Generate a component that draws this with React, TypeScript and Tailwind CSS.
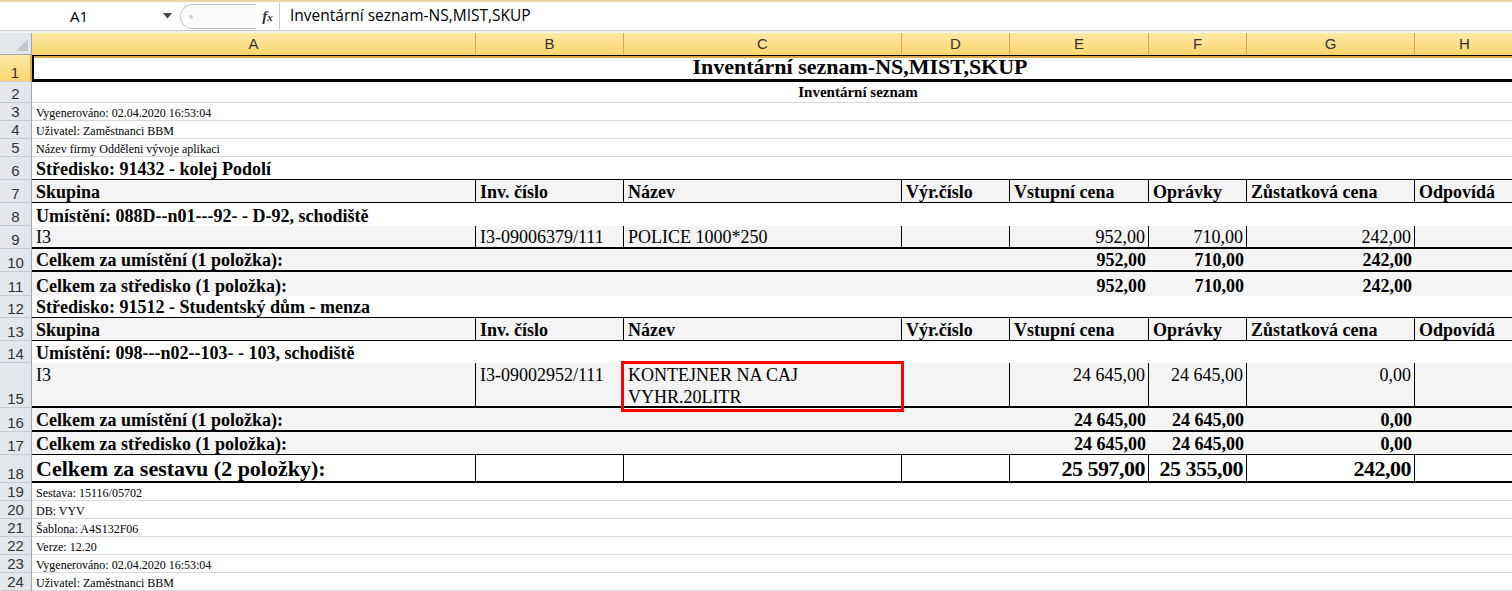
import React from 'react';

const COLS = 'grid-cols-[444px_148px_278px_108px_139px_98px_168px_100px_169px]';
const SERIF = "font-['Liberation_Serif','Times_New_Roman',serif]";
const SANS = "font-['Liberation_Sans',Arial,sans-serif]";

type RowProps = {
  n: number;
  h: string;
  active?: boolean;
  className?: string;
  children?: React.ReactNode;
};

const Row: React.FC<RowProps> = ({ n, h, active, className = '', children }) => (
  <div className={`flex ${h}`}>
    <div
      className={`w-[32px] shrink-0 flex items-end justify-center pb-[1px] text-[15px] leading-none ${SANS} border-b border-[#c6cbd2] ${
        active ? 'bg-gradient-to-b from-[#fde9a4] to-[#fbd66e] text-[#333] border-r-2 border-r-[#e2a848]' : 'bg-[#e4e7ec] text-[#333] border-r border-r-[#9ea6b2]'
      }`}
    >
      {n}
    </div>
    <div className={`grid ${COLS} ${SERIF} text-black ${className}`}>{children}</div>
  </div>
);

// plain text cell
const Cell: React.FC<{ className?: string; children?: React.ReactNode }> = ({ className = '', children }) => (
  <div className={`flex items-end px-[4px] pb-[1px] whitespace-nowrap overflow-visible ${className}`}>{children}</div>
);

const headers = ['Skupina', 'Inv. číslo', 'Název', 'Výr.číslo', 'Vstupní cena', 'Oprávky', 'Zůstatková cena', 'Odpovídá'];

const HeaderRow: React.FC<{ n: number }> = ({ n }) => (
  <Row n={n} h="h-[23px]" className="bg-[#f4f4f4] border-b border-black text-[18px] font-bold leading-none">
    {headers.map((t, i) => (
      <Cell key={t} className={i < 7 ? 'border-r border-black' : ''}>
        {t}
      </Cell>
    ))}
    <Cell />
  </Row>
);

const SmallRow: React.FC<{ n: number; text: string }> = ({ n, text }) => (
  <Row n={n} h="h-[18px]" className="border-b border-[#d9d9d9] text-[12px] leading-none text-[#333]">
    <Cell className="col-span-9 px-[3px]">{text}</Cell>
  </Row>
);

const TotalRow: React.FC<{ n: number; label: string; vals: string[]; h: string; border: string }> = ({
  n,
  label,
  vals,
  h,
  border,
}) => (
  <Row n={n} h={h} className={`bg-[#f4f4f4] ${border} text-[18px] font-bold leading-none`}>
    <Cell className="col-span-4">{label}</Cell>
    {vals.map((v, i) => (
      <Cell key={i} className="justify-end pr-[3px]">
        {v}
      </Cell>
    ))}
    <Cell />
    <Cell />
  </Row>
);

const FormulaBar = () => (
  <div className="h-[33px] border-t-2 border-[#e9d8a6] bg-[#f3f3f3]">
    <div className="flex h-[29px] bg-white border-b border-[#c9cdd3]">
      <div className="w-[158px] flex items-center justify-center text-[15px] text-black font-['Open_Sans',sans-serif]">
        A1
      </div>
      <div className="w-[22px] flex items-center justify-start pl-[5px]">
        <svg width="9" height="6" viewBox="0 0 9 6">
          <path d="M0 0h9L4.5 5.5z" fill="#444" />
        </svg>
      </div>
      <div className="mt-[2px] h-[25px] w-[76px] rounded-l-full border-l border-t border-b border-[#bfc4cb] bg-[#fbfbfb] flex items-center">
        <div className="ml-[8px] h-[4px] w-[4px] rounded-full bg-[#cfd3d8]" />
      </div>
      <div className="w-[24px] flex items-center justify-center border-r border-[#c9cdd3]">
        <span className={`${SERIF} italic font-bold text-[15px] text-[#333] leading-none`}>
          f<span className="text-[11px]">x</span>
        </span>
      </div>
      <div className="flex items-center pl-[10px] text-[15.5px] text-black font-['Open_Sans',sans-serif]">
        Inventární seznam-NS,MIST,SKUP
      </div>
    </div>
  </div>
);

const ColumnHeaders = () => {
  const letters = ['A', 'B', 'C', 'D', 'E', 'F', 'G', 'H', ''];
  return (
    <div className="flex h-[22px]">
      <div className="w-[32px] shrink-0 bg-[#e4e7ec] border-r border-b border-[#9ea6b2] relative overflow-hidden">
        <svg className="absolute right-[3px] bottom-[3px]" width="12" height="12" viewBox="0 0 12 12">
          <path d="M12 0V12H0z" fill="#c3c7cc" />
        </svg>
      </div>
      <div className={`grid ${COLS}`}>
        {letters.map((l, i) => (
          <div
            key={i}
            className={`flex items-center justify-center text-[15px] text-[#333] ${SANS} bg-gradient-to-b from-[#fdeaa6] to-[#fbd468] border-r border-[#d1a658] border-b-2 border-b-[#e2a848]`}
          >
            {l}
          </div>
        ))}
      </div>
    </div>
  );
};

export default function App() {
  return (
    <div className="w-[1512px] h-[591px] overflow-hidden bg-white relative">
      <FormulaBar />
      <ColumnHeaders />

      <Row n={1} h="h-[27px]" active className="border-l-2 border-t border-b-[3px] border-black">
        <div className="col-span-9 flex items-end justify-center text-[22px] font-bold leading-none pb-[1px]">
          Inventární seznam-NS,MIST,SKUP
        </div>
      </Row>
      <Row n={2} h="h-[21px]" className="border-b border-[#d9d9d9]">
        <div className="col-span-9 flex items-end justify-center text-[15px] font-bold leading-none pb-[2px]">
          Inventární seznam
        </div>
      </Row>
      <SmallRow n={3} text="Vygenerováno: 02.04.2020 16:53:04" />
      <SmallRow n={4} text="Uživatel: Zaměstnanci BBM" />
      <SmallRow n={5} text="Název firmy Odděleni vývoje aplikaci" />

      <Row n={6} h="h-[23px]" className="border-b border-black text-[18px] font-bold leading-none">
        <Cell className="col-span-9">Středisko: 91432 - kolej Podolí</Cell>
      </Row>
      <HeaderRow n={7} />
      <Row n={8} h="h-[23px]" className="text-[18px] font-bold leading-none">
        <Cell className="col-span-9">Umístění: 088D--n01---92- - D-92, schodiště</Cell>
      </Row>
      <Row n={9} h="h-[23px]" className="bg-[#f4f4f4] border-b-2 border-black text-[18px] leading-none">
        <Cell className="border-r border-black">I3</Cell>
        <Cell className="border-r border-black">I3-09006379/111</Cell>
        <Cell className="border-r border-black">POLICE 1000*250</Cell>
        <Cell className="border-r border-black" />
        <Cell className="border-r border-black justify-end pr-[3px]">952,00</Cell>
        <Cell className="border-r border-black justify-end pr-[3px]">710,00</Cell>
        <Cell className="border-r border-black justify-end pr-[3px]">242,00</Cell>
        <Cell />
        <Cell />
      </Row>
      <TotalRow n={10} h="h-[23px]" border="border-b-2 border-black" label="Celkem za umístění (1 položka):" vals={['952,00', '710,00', '242,00']} />
      <TotalRow n={11} h="h-[24px]" border="" label="Celkem za středisko (1 položka):" vals={['952,00', '710,00', '242,00']} />

      <Row n={12} h="h-[22px]" className="border-b border-black text-[18px] font-bold leading-none">
        <Cell className="col-span-9">Středisko: 91512 - Studentský dům - menza</Cell>
      </Row>
      <HeaderRow n={13} />
      <Row n={14} h="h-[22px]" className="text-[18px] font-bold leading-none">
        <Cell className="col-span-9">Umístění: 098---n02--103- - 103, schodiště</Cell>
      </Row>
      <Row n={15} h="h-[45px]" className="bg-[#f4f4f4] border-b-2 border-black text-[18px] leading-[22px]">
        <div className="border-r border-black px-[4px] pt-[1px]">I3</div>
        <div className="border-r border-black px-[4px] pt-[1px]">I3-09002952/111</div>
        <div className="border-r border-black px-[4px] pt-[1px]">
          KONTEJNER NA CAJ
          <br />
          VYHR.20LITR
        </div>
        <div className="border-r border-black" />
        <div className="border-r border-black text-right pr-[3px] pt-[1px]">24 645,00</div>
        <div className="border-r border-black text-right pr-[3px] pt-[1px]">24 645,00</div>
        <div className="border-r border-black text-right pr-[3px] pt-[1px]">0,00</div>
        <div />
        <div />
      </Row>
      <TotalRow n={16} h="h-[24px]" border="border-b-2 border-black" label="Celkem za umístění (1 položka):" vals={['24 645,00', '24 645,00', '0,00']} />
      <TotalRow n={17} h="h-[23px]" border="border-b border-black" label="Celkem za středisko (1 položka):" vals={['24 645,00', '24 645,00', '0,00']} />
      <Row n={18} h="h-[28px]" className="border-b-2 border-black text-[22px] font-bold leading-none">
        <Cell className="border-r border-black">Celkem za sestavu (2 položky):</Cell>
        <Cell className="border-r border-black" />
        <Cell className="border-r border-black" />
        <Cell className="border-r border-black" />
        <Cell className="border-r border-black justify-end pr-[3px] tracking-[-0.5px]">25 597,00</Cell>
        <Cell className="border-r border-black justify-end pr-[3px] tracking-[-0.5px]">25 355,00</Cell>
        <Cell className="border-r border-black justify-end pr-[3px] tracking-[-0.5px]">242,00</Cell>
        <Cell />
        <Cell />
      </Row>
      <SmallRow n={19} text="Sestava: 15116/05702" />
      <SmallRow n={20} text="DB: VYV" />
      <SmallRow n={21} text="Šablona: A4S132F06" />
      <SmallRow n={22} text="Verze: 12.20" />
      <SmallRow n={23} text="Vygenerováno: 02.04.2020 16:53:04" />
      <SmallRow n={24} text="Uživatel: Zaměstnanci BBM" />

      {/* red annotation frame */}
      <div className="absolute left-[621px] top-[361px] w-[283px] h-[51px] border-[3px] border-[#ff0000] pointer-events-none" />
    </div>
  );
}
